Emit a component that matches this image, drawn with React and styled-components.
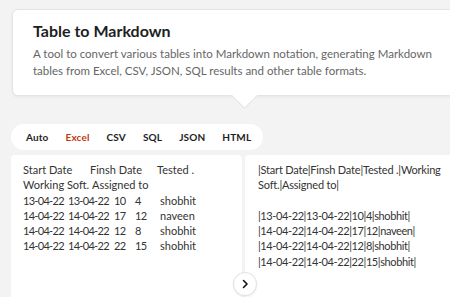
import React from "react";
import styled, { createGlobalStyle } from "styled-components";

const GlobalStyle = createGlobalStyle`
  html, body {
    margin: 0;
    padding: 0;
    background: #f3f3f3;
    overflow: hidden;
    font-family: Lato, "Noto Sans", sans-serif;
  }
`;

const Page = styled.div`
  width: 450px;
  height: 297px;
  padding: 9px 0 0 11px;
  box-sizing: border-box;
  position: relative;
  overflow: hidden;
`;

const Card = styled.div`
  position: relative;
  margin-left: 1px;
  width: 470px;
  height: 87px;
  box-sizing: border-box;
  background: #fff;
  border: 1px solid #e4e4e4;
  border-radius: 6px;
  box-shadow: 0 1px 3px rgba(0, 0, 0, 0.06);
  padding: 10px 20px 0 20px;
`;

const Pointer = styled.div`
  position: absolute;
  left: 222px;
  bottom: -10px;
  width: 18px;
  height: 18px;
  background: #fff;
  border-right: 1px solid #e4e4e4;
  border-bottom: 1px solid #e4e4e4;
  transform: rotate(45deg);
`;

const Title = styled.h1`
  margin: 0;
  font-size: 16px;
  line-height: 21px;
  font-weight: 700;
  color: #1e1e1e;
`;

const Desc = styled.p`
  margin: 4px 0 0;
  font-size: 11.5px;
  line-height: 17px;
  color: #666;
`;

const Tabs = styled.div`
  margin-top: 28px;
  width: 252px;
  height: 26px;
  box-sizing: border-box;
  background: #fff;
  border-radius: 13px;
  display: flex;
  align-items: center;
  gap: 17px;
  padding: 0 13px 0 15px;
`;

const Tab = styled.span`
  font-size: 10px;
  font-weight: 700;
  letter-spacing: 0.15px;
  color: ${(p) => (p.$active ? "#bf3a12" : "#1e1e1e")};
`;

const Panels = styled.div`
  margin-top: 5px;
  display: flex;
  gap: 3px;
`;

const Panel = styled.div`
  flex: none;
  width: 231px;
  height: 150px;
  box-sizing: border-box;
  background: #fff;
  border-radius: 4px 4px 0 0;
  padding: 7px 0 0 ${(p) => p.$pad}px;
  font-size: 11px;
  line-height: 15.3px;
  color: #333;
`;

const Line = styled.div`
  white-space: pre;
  height: 15.3px;
  letter-spacing: ${(p) => p.$ls || 0}px;
`;

const Cell = styled.span`
  display: inline-block;
  width: ${(p) => (p.$w ? `${p.$w}px` : "auto")};
  letter-spacing: ${(p) => (p.$num ? "-0.7px" : "0")};
`;

const NextButton = styled.button`
  position: absolute;
  left: 233px;
  top: 272px;
  width: 24px;
  height: 24px;
  border-radius: 50%;
  border: 1px solid #e2e2e2;
  background: #fff;
  padding: 0;
  display: flex;
  align-items: center;
  justify-content: center;
  box-shadow: 0 1px 2px rgba(0, 0, 0, 0.08);
`;

const rows = [
  ["13-04-22", "13-04-22", "10", "4", "shobhit"],
  ["14-04-22", "14-04-22", "17", "12", "naveen"],
  ["14-04-22", "14-04-22", "12", "8", "shobhit"],
  ["14-04-22", "14-04-22", "22", "15", "shobhit"],
];

export default function App() {
  return (
    <Page>
      <GlobalStyle />
      <Card>
        <Title>Table to Markdown</Title>
        <Desc>
          A tool to convert various tables into Markdown notation, generating Markdown
          <br />
          tables from Excel, CSV, JSON, SQL results and other table formats.
        </Desc>
        <Pointer />
      </Card>
      <Tabs>
        <Tab>Auto</Tab>
        <Tab $active>Excel</Tab>
        <Tab>CSV</Tab>
        <Tab>SQL</Tab>
        <Tab>JSON</Tab>
        <Tab>HTML</Tab>
      </Tabs>
      <Panels>
        <Panel $pad={12}>
          <Line>
            <Cell $w={67}>Start Date</Cell>
            <Cell $w={67}>Finsh Date</Cell>
            <Cell>Tested .</Cell>
          </Line>
          <Line>
            <Cell $w={69}>Working Soft.</Cell>
            <Cell>Assigned to</Cell>
          </Line>
          {rows.map((r, i) => (
            <Line key={i}>
              <Cell $w={45} $num>{r[0]}</Cell>
              <Cell $w={46} $num>{r[1]}</Cell>
              <Cell $w={21} $num>{r[2]}</Cell>
              <Cell $w={25} $num>{r[3]}</Cell>
              <Cell>{r[4]}</Cell>
            </Line>
          ))}
        </Panel>
        <Panel $pad={13}>
          <Line $ls={-0.2}>|Start Date|Finsh Date|Tested .|Working</Line>
          <Line $ls={-0.2}>Soft.|Assigned to|</Line>
          <Line> </Line>
          {rows.map((r, i) => (
            <Line key={i} $ls={-0.4}>
              |{r.join("|")}|
            </Line>
          ))}
        </Panel>
      </Panels>
      <NextButton>
        <svg width="12" height="12" viewBox="0 0 24 24" fill="none" stroke="#111" strokeWidth="3.2" strokeLinecap="round" strokeLinejoin="round">
          <path d="M9 5l7 7-7 7" />
        </svg>
      </NextButton>
    </Page>
  );
}
